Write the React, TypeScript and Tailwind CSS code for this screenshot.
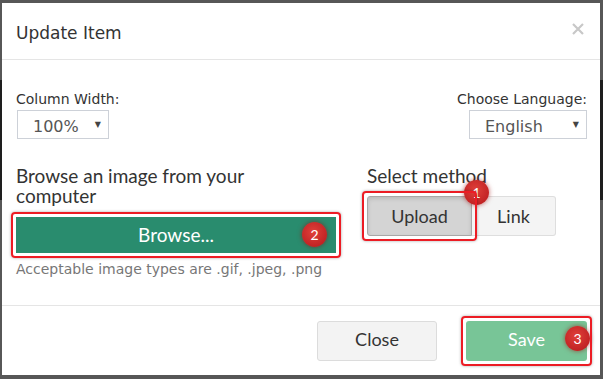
import type { ReactNode } from "react";

function Badge({ n }: { n: number }) {
  return (
    <span className="flex h-[25px] w-[25px] items-center justify-center rounded-full bg-[radial-gradient(circle_at_45%_40%,#e0403a,#b5171b)] font-['Lato',sans-serif] text-[14px] leading-none text-white shadow-[0_0_5px_rgba(150,0,0,0.6)]">
      {n}
    </span>
  );
}

function Marked({ children, className }: { children: ReactNode; className?: string }) {
  return (
    <div className={"relative " + (className ?? "")}>
      {children}
      <span className="pointer-events-none absolute -inset-[5px] rounded-[4px] border-2 border-[#ec1c24] shadow-[0_0_3px_rgba(0,0,0,0.35)]" />
    </div>
  );
}

function Select({ value, className }: { value: string; className?: string }) {
  return (
    <div
      className={
        "flex h-[29px] items-center justify-between border border-[#cdd1d8] bg-white pl-[15px] pr-[7px] font-['DejaVu_Sans',sans-serif] text-[16px] text-[#555] " +
        (className ?? "")
      }
    >
      <span className="pt-[3px]">{value}</span>
      <span className="text-[8px] text-[#444]">▼</span>
    </div>
  );
}

export default function App() {
  return (
    <div className="flex h-[379px] w-[603px] bg-[linear-gradient(to_bottom,#575757_0px,#575757_80px,#1e1e1e_80px,#1e1e1e_200px,#575757_200px)] pb-[4px] pl-[2px] pr-[3px] pt-[3px]">
      <div className="flex flex-1 flex-col bg-white text-[#333]">
        {/* Header */}
        <div className="flex h-[57px] shrink-0 items-center justify-between border-b border-[#e5e5e5] pl-[14px] pr-[16px]">
          <h1 className="pt-[5px] font-['DejaVu_Sans',sans-serif] text-[17px] text-[#333]">Update Item</h1>
          <svg width="12" height="12" viewBox="0 0 12 12" className="mb-[5px]">
            <path d="M1 1L11 11M11 1L1 11" stroke="#c8c8c8" strokeWidth="2.2" />
          </svg>
        </div>

        {/* Body */}
        <div className="flex flex-1 flex-col pl-[14px] pr-[13px] pt-[31px]">
          <div className="flex justify-between font-['DejaVu_Sans',sans-serif] text-[14px] leading-[17px]">
            <div className="flex flex-col">
              <label>Column Width:</label>
              <Select value="100%" className="ml-[1px] mt-[2px] w-[92px]" />
            </div>
            <div className="flex flex-col items-end">
              <label>Choose Language:</label>
              <Select value="English" className="mt-[2px] w-[118px]" />
            </div>
          </div>

          <div className="mt-[27px] flex gap-[31px] font-['Lato',sans-serif]">
            <div className="flex w-[320px] flex-col">
              <h2 className="w-[300px] text-[19px] leading-[20px]">Browse an image from your computer</h2>
              <Marked className="mt-[11px]">
                <button className="flex h-[36px] w-full items-center justify-center bg-[#298c6e] text-[19px] text-white">
                  Browse...
                </button>
                <span className="absolute right-[9px] top-[5px]">
                  <Badge n={2} />
                </span>
              </Marked>
              <p className="mt-[8px] font-['DejaVu_Sans',sans-serif] text-[14px] leading-[16px] text-[#777]">
                Acceptable image types are .gif, .jpeg, .png
              </p>
            </div>
            <div className="flex flex-col">
              <h2 className="text-[19px] leading-[20px]">Select method</h2>
              <div className="mt-[10px] flex">
                <Marked>
                  <button className="h-[40px] w-[105px] rounded-l-[3px] border border-[#a8a8a8] bg-[#d4d4d4] text-[18px] text-[#333] shadow-[inset_0_2px_4px_rgba(0,0,0,0.12)]">
                    Upload
                  </button>
                  <span className="absolute -right-[17px] -top-[16px]">
                    <Badge n={1} />
                  </span>
                </Marked>
                <button className="h-[40px] w-[84px] rounded-r-[3px] border border-l-0 border-[#dedede] bg-[#f4f4f4] text-[18px] text-[#333]">
                  Link
                </button>
              </div>
            </div>
          </div>
        </div>

        {/* Footer */}
        <div className="flex h-[70px] shrink-0 items-start justify-end gap-[29px] border-t border-[#e5e5e5] pr-[13px] pt-[15px] font-['Lato',sans-serif] text-[18px]">
          <button className="h-[40px] w-[120px] rounded-[3px] border border-[#dcdcdc] bg-[#f3f3f3] pb-[3px] text-[#333]">Close</button>
          <Marked>
            <button className="h-[40px] w-[121px] rounded-[3px] bg-[#78c597] pb-[3px] text-white">Save</button>
            <span className="absolute -right-[3px] top-[5px]">
              <Badge n={3} />
            </span>
          </Marked>
        </div>
      </div>
    </div>
  );
}
